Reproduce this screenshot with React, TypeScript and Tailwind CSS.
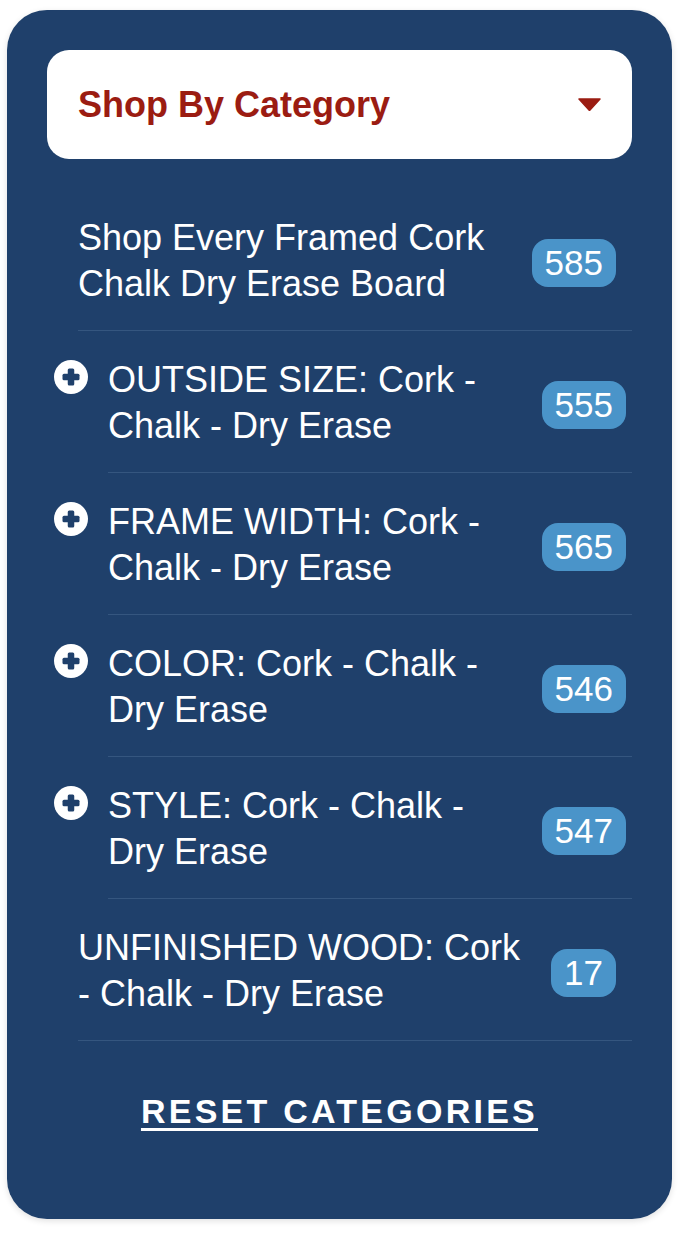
import React from "react";

const NAVY = "#1f406b";

function PlusIcon() {
  return (
    <svg width="34" height="34" viewBox="0 0 34 34" className="block">
      <circle cx="17" cy="17" r="17" fill="#ffffff" />
      <rect x="13.75" y="8.5" width="6.5" height="17" rx="1.5" fill={NAVY} />
      <rect x="8.5" y="13.75" width="17" height="6.5" rx="1.5" fill={NAVY} />
    </svg>
  );
}

function Badge({ n }: { n: string }) {
  return (
    <span className="mt-[4px] shrink-0 h-[48px] rounded-[16px] bg-[#4a94c9] px-[13px] text-[35px] leading-[48px] text-white">
      {n}
    </span>
  );
}

const nested = [
  { label: "OUTSIDE SIZE: Cork - Chalk - Dry Erase", n: "555" },
  { label: "FRAME WIDTH: Cork - Chalk - Dry Erase", n: "565" },
  { label: "COLOR: Cork - Chalk - Dry Erase", n: "546" },
  { label: "STYLE: Cork - Chalk - Dry Erase", n: "547" },
];

export default function App() {
  return (
    <div
      className="min-h-[1248px] bg-white pt-[10px] pl-[7px]"
      style={{ fontFamily: '"Liberation Sans", Arial, Helvetica, sans-serif' }}
    >
      <div className="w-[665px] rounded-[40px] bg-[#1f406b] px-[40px] pt-[40px] pb-[88px] shadow-[0_2px_6px_rgba(0,0,0,0.12)]">
        <div className="flex h-[109px] items-center justify-between rounded-[22px] bg-white pl-[31px] pr-[31px]">
          <span className="text-[36px] font-bold leading-none text-[#9b1c12]">Shop By Category</span>
          <svg width="23" height="13" viewBox="0 0 23 13" className="block">
            <path d="M1 1 L22 1 L11.5 12.5 Z" fill="#9b1c12" stroke="#9b1c12" strokeWidth="1.5" strokeLinejoin="round" />
          </svg>
        </div>

        <ul className="mt-[30px] pl-[31px] text-white">
          <li className="flex items-center gap-4 border-b border-[#35567f] pt-[26px] pb-[23px] pr-[16px]">
            <span className="flex-1 text-[36px] leading-[46px]">Shop Every Framed Cork Chalk Dry Erase Board</span>
            <Badge n="585" />
          </li>
          <li>
            <ul className="pl-[30px]">
              {nested.map((it) => (
                <li
                  key={it.label}
                  className="flex items-center gap-4 border-b border-[#35567f] pt-[26px] pb-[23px] pr-[6px]"
                >
                  <div className="relative flex-1">
                    <span className="absolute -left-[54px] top-[3px]">
                      <PlusIcon />
                    </span>
                    <span className="block text-[36px] leading-[46px]">{it.label}</span>
                  </div>
                  <Badge n={it.n} />
                </li>
              ))}
            </ul>
          </li>
          <li className="flex items-center gap-4 border-b border-[#35567f] pt-[26px] pb-[23px] pr-[16px]">
            <span className="flex-1 text-[36px] leading-[46px]">UNFINISHED WOOD: Cork - Chalk - Dry Erase</span>
            <Badge n="17" />
          </li>
        </ul>

        <div className="mt-[50px] text-center">
          <a className="text-[34px] font-bold leading-[40px] tracking-[3.25px] text-white underline decoration-[3px] underline-offset-[5px]">
            RESET CATEGORIES
          </a>
        </div>
      </div>
    </div>
  );
}
